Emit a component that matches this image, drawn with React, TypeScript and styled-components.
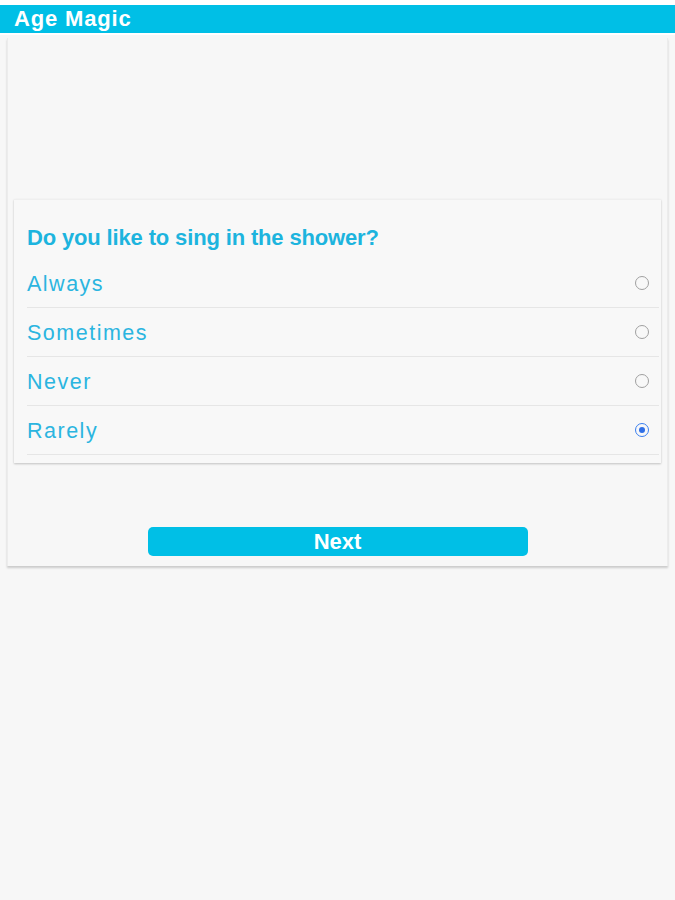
import React, { useState } from "react";
import styled, { createGlobalStyle } from "styled-components";

const Global = createGlobalStyle`
  html, body { margin: 0; padding: 0; background: #f7f7f7; }
  body { font-family: "Liberation Sans", Arial, sans-serif; }
  * { box-sizing: border-box; }
`;

const Page = styled.div`
  min-height: 900px;
  background: #f7f7f7;
`;

const TopStrip = styled.div`
  background: #ffffff;
  padding: 5px 0 2px;
`;

const Header = styled.header`
  height: 28px;
  background: #00bfe6;
  display: flex;
  align-items: center;
  padding-left: 14px;
  color: #ffffff;
  font-weight: 700;
  font-size: 22px;
  letter-spacing: 0.85px;
`;

const OuterCard = styled.main`
  margin: 3px 7px 0;
  background: #f7f7f7;
  border-left: 1px solid #ececec;
  border-right: 1px solid #ececec;
  box-shadow: 0 2px 2px rgba(0, 0, 0, 0.18);
  padding: 161px 6px 10px 6px;
  display: flex;
  flex-direction: column;
`;

const QuestionCard = styled.section`
  background: #f8f8f8;
  border-top: 1px solid #efefef;
  box-shadow: 0 1px 2px rgba(0, 0, 0, 0.22);
  padding: 0 2px 8px 13px;
`;

const Question = styled.h2`
  margin: 0 0 8px;
  padding-top: 25px;
  font-size: 22px;
  line-height: 26px;
  font-weight: 700;
  color: #1db4de;
  letter-spacing: -0.15px;
`;

const OptionRow = styled.label`
  height: 49px;
  display: flex;
  align-items: center;
  justify-content: space-between;
  border-bottom: 1px solid #e6e6e6;
  padding-right: 10px;
  padding-top: 3px;
  cursor: pointer;
`;

const OptionText = styled.span`
  font-size: 21.5px;
  color: #2bb5e0;
  letter-spacing: 1.5px;
`;

const Radio = styled.span<{ $checked: boolean }>`
  width: 14px;
  height: 14px;
  margin-top: -3px;
  border-radius: 50%;
  border: 1.5px solid ${(p) => (p.$checked ? "#3a7ff0" : "#a0a0a0")};
  display: flex;
  align-items: center;
  justify-content: center;
  &::after {
    content: "";
    width: 6px;
    height: 6px;
    border-radius: 50%;
    background: ${(p) => (p.$checked ? "#2f6fe6" : "transparent")};
  }
`;

const ButtonRow = styled.div`
  display: flex;
  justify-content: center;
  padding-top: 64px;
`;

const NextButton = styled.button`
  width: 380px;
  height: 29px;
  border: none;
  border-radius: 5px;
  background: #00bfe6;
  color: #ffffff;
  font-family: "Liberation Sans", Arial, sans-serif;
  font-weight: 700;
  font-size: 22px;
  padding: 0;
  cursor: pointer;
`;

const options = ["Always", "Sometimes", "Never", "Rarely"];

export default function App() {
  const [selected, setSelected] = useState("Rarely");
  return (
    <Page>
      <Global />
      <TopStrip>
        <Header>Age Magic</Header>
      </TopStrip>
      <OuterCard>
        <QuestionCard>
          <Question>Do you like to sing in the shower?</Question>
          {options.map((o) => (
            <OptionRow key={o} onClick={() => setSelected(o)}>
              <OptionText>{o}</OptionText>
              <Radio $checked={selected === o} />
            </OptionRow>
          ))}
        </QuestionCard>
        <ButtonRow>
          <NextButton>Next</NextButton>
        </ButtonRow>
      </OuterCard>
    </Page>
  );
}
